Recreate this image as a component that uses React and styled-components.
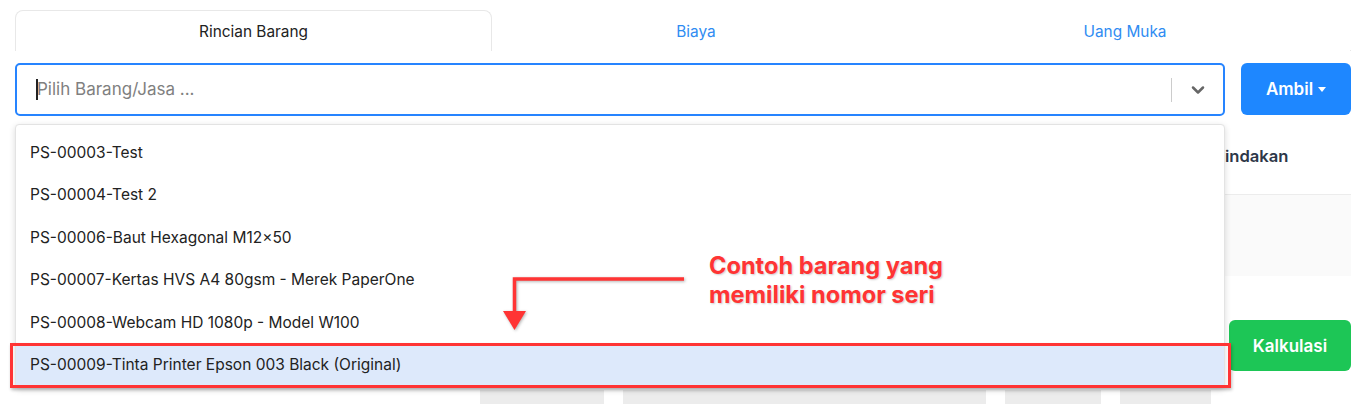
import React from "react";
import styled, { createGlobalStyle } from "styled-components";
import { ChevronDown } from "lucide-react";

const Global = createGlobalStyle`
  html, body { margin: 0; padding: 0; background: #fff; }
  body { font-family: Inter, "Noto Sans", sans-serif; color: #222; }
  * { box-sizing: border-box; }
`;

const Page = styled.div`
  position: relative;
  width: 1364px;
  height: 404px;
  overflow: hidden;
  padding: 10px 13px 0 15px;
`;

const TabBar = styled.div`
  display: flex;
  height: 41px;
  border-bottom: 1px solid #e8e8e8;
`;

const Tab = styled.div`
  width: ${(p) => p.$w}px;
  display: flex;
  align-items: center;
  justify-content: center;
  font-size: 15.4px;
  color: ${(p) => (p.$active ? "#222" : "#2f8cf2")};
  background: #fff;
  border: 1px solid ${(p) => (p.$active ? "#e8e8e8" : "transparent")};
  border-bottom: none;
  border-radius: 8px 8px 0 0;
  margin-bottom: -1px;
  height: 41px;
`;

const SelectRow = styled.div`
  display: flex;
  gap: 16px;
  margin-top: 12px;
`;

const SelectBox = styled.div`
  flex: 1;
  height: 53px;
  border: 2px solid #2684ff;
  border-radius: 5px;
  display: flex;
  align-items: center;
  padding-left: 19px;
`;

const Caret = styled.span`
  width: 2px;
  height: 21px;
  background: #222;
  margin-right: -1px;
`;

const Placeholder = styled.span`
  flex: 1;
  font-size: 17px;
  color: #808080;
  margin-top: -1px;
`;

const Separator = styled.span`
  width: 1px;
  height: 24px;
  background: #cccccc;
`;

const Indicator = styled.span`
  width: 51px;
  display: flex;
  align-items: center;
  justify-content: center;
  color: #666;
`;

const PrimaryButton = styled.button`
  width: 110px;
  height: 52px;
  border: none;
  border-radius: 6px;
  background: #1e87ff;
  color: #fff;
  font-family: Inter, sans-serif;
  font-weight: 600;
  font-size: 17px;
  display: flex;
  align-items: center;
  justify-content: center;
  gap: 5px;
`;

const DownTriangle = styled.span`
  width: 0;
  height: 0;
  border-left: 4.5px solid transparent;
  border-right: 4.5px solid transparent;
  border-top: 5px solid #fff;
`;

const TableHead = styled.div`
  display: flex;
  justify-content: flex-end;
  align-items: center;
  height: 78px;
  margin-top: 1px;
  border-bottom: 1px solid #ececec;
`;

const HeadCell = styled.div`
  width: 137px;
  font-weight: 600;
  font-size: 16.6px;
  color: #2d3748;
`;

const EmptyRow = styled.div`
  height: 81px;
  background: #fafafa;
`;

const Footer = styled.div`
  display: flex;
  justify-content: flex-end;
  margin-top: 44px;
`;

const SuccessButton = styled.button`
  width: 122px;
  height: 51px;
  border: none;
  border-radius: 6px;
  background: #1dc656;
  color: #fff;
  font-family: Inter, sans-serif;
  font-weight: 600;
  font-size: 17px;
`;

const FieldRow = styled.div`
  display: flex;
  margin-top: 19px;
  margin-left: 465px;
  gap: 19px;
`;

const GhostField = styled.div`
  width: ${(p) => p.$w}px;
  height: 14px;
  background: #ececec;
`;

const Menu = styled.div`
  position: absolute;
  left: 15px;
  top: 124px;
  width: 1210px;
  height: 264px;
  background: #fff;
  border: 1px solid #e3e3e3;
  border-radius: 4px;
  box-shadow: 0 2px 6px rgba(0, 0, 0, 0.15);
  padding-top: 6px;
`;

const Option = styled.div`
  position: relative;
  height: 42.5px;
  display: flex;
  align-items: center;
  padding-left: 14px;
  font-size: 15.5px;
  color: #222;
  background: ${(p) => (p.$focused ? "#dde9fb" : "transparent")};

  ${(p) =>
    p.$focused &&
    `
    &::after {
      content: "";
      position: absolute;
      left: -6px;
      right: -7px;
      top: -1px;
      bottom: -2px;
      border: 3px solid #ff3434;
      box-shadow: 1px 2px 3px rgba(0,0,0,0.25);
    }
  `}
`;

const Note = styled.div`
  position: absolute;
  left: 709px;
  top: 251px;
  font-family: Inter, "Noto Sans", sans-serif;
  font-weight: 700;
  font-size: 23.6px;
  line-height: 29px;
  color: #ff3434;
  text-shadow: 1px 1px 2px rgba(0, 0, 0, 0.2);
`;

const ArrowSvg = styled.svg`
  position: absolute;
  left: 495px;
  top: 270px;
  overflow: visible;
  filter: drop-shadow(1px 1px 1.5px rgba(0, 0, 0, 0.3));
`;

const items = [
  "PS-00003-Test",
  "PS-00004-Test 2",
  "PS-00006-Baut Hexagonal M12×50",
  "PS-00007-Kertas HVS A4 80gsm - Merek PaperOne",
  "PS-00008-Webcam HD 1080p - Model W100",
  "PS-00009-Tinta Printer Epson 003 Black (Original)",
];

export default function App() {
  return (
    <>
      <Global />
      <Page>
        <TabBar>
          <Tab $w={477} $active>Rincian Barang</Tab>
          <Tab $w={408}>Biaya</Tab>
          <Tab $w={450}>Uang Muka</Tab>
        </TabBar>
        <SelectRow>
          <SelectBox>
            <Caret />
            <Placeholder>Pilih Barang/Jasa ...</Placeholder>
            <Separator />
            <Indicator>
              <ChevronDown size={20} strokeWidth={3} />
            </Indicator>
          </SelectBox>
          <PrimaryButton>
            Ambil <DownTriangle />
          </PrimaryButton>
        </SelectRow>
        <TableHead>
          <HeadCell>Tindakan</HeadCell>
        </TableHead>
        <EmptyRow />
        <Footer>
          <SuccessButton>Kalkulasi</SuccessButton>
        </Footer>
        <FieldRow>
          <GhostField $w={124} />
          <GhostField $w={363} />
          <GhostField $w={96} />
          <GhostField $w={91} />
        </FieldRow>

        <Menu>
          {items.map((t, i) => (
            <Option key={t} $focused={i === items.length - 1}>
              {t}
            </Option>
          ))}
        </Menu>

        <ArrowSvg width="200" height="70" viewBox="0 0 200 70">
          <polyline
            points="189,9 19.5,9 19.5,42"
            fill="none"
            stroke="#ff3434"
            strokeWidth="3.5"
          />
          <polygon points="8,41 31,41 19.5,60" fill="#ff3434" />
        </ArrowSvg>
        <Note>
          Contoh barang yang
          <br />
          memiliki nomor seri
        </Note>
      </Page>
    </>
  );
}
